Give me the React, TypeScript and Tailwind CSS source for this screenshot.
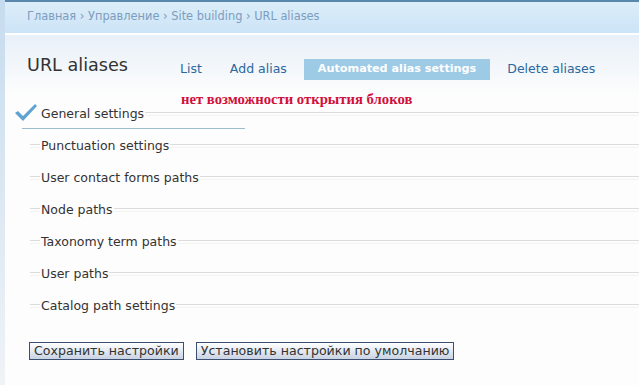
import { useState } from "react";

const sections = [
  "General settings",
  "Punctuation settings",
  "User contact forms paths",
  "Node paths",
  "Taxonomy term paths",
  "User paths",
  "Catalog path settings",
];

function CheckMark() {
  return (
    <svg width="24" height="20" viewBox="0 0 24 20" className="absolute left-[9px] top-[4px]">
      <path d="M1 11 L4 9 L9 14 L21 2 L23 4 L9 19 Z" fill="#5fa3d3" />
    </svg>
  );
}

function Line() {
  return (
    <>
      <div className="h-px bg-[#dcdcdc]" />
      <div className="h-[2px]" />
      <div className="h-px bg-[#f2f2f2]" />
    </>
  );
}

function Row({ label, active }: { label: string; active?: boolean }) {
  return (
    <div className="relative h-[32px] flex items-center">
      {active && <CheckMark />}
      <div className="w-[25px]" />
      <div className="w-[10px] flex flex-col">{!active && <Line />}</div>
      <span className="px-px text-[12.5px] text-[#333] whitespace-nowrap">{label}</span>
      <div className="flex-1 flex flex-col">
        <Line />
      </div>
      {active && (
        <div className="absolute left-[17px] top-[30px] w-[223px] h-px bg-[#9cbccf]" />
      )}
    </div>
  );
}

export default function App() {
  const [tab] = useState<string>("Automated alias settings");
  const tabs = ["List", "Add alias", "Automated alias settings", "Delete aliases"];

  return (
    <div
      className="w-[639px] h-[385px] overflow-hidden bg-[#fdfdfd] flex"
      style={{ fontFamily: '"DejaVu Sans", Verdana, sans-serif' }}
    >
      <div className="w-[5px] bg-gradient-to-b from-[#c6dcee] to-[#f0f3f6]" />
      <div className="flex-1 flex flex-col">
        {/* breadcrumb */}
        <div className="h-[33px] border-t-2 border-[#5a88ad] bg-gradient-to-b from-[#dcedf8] to-[#cce4f7] flex items-center pl-[22px] pb-[1px] text-[11.4px] text-[#7c9dc0]">
          Главная › Управление › Site building › URL aliases
        </div>
        <div className="h-[2px] bg-white" />

        <div className="bg-gradient-to-b from-[#e8f0f8] to-[#fdfdfd] h-[60px] flex items-start pt-[19px] pl-[22px]">
          <h1 className="text-[17.6px] text-[#333] w-[153px] leading-[22px]">URL aliases</h1>
          <div className="flex items-center pt-[5px]">
            {tabs.map((t, i) => (
              <span
                key={t}
                className={
                  t === tab
                    ? "h-[21px] px-[14px] flex items-center bg-[#9dcbe6] text-white font-bold text-[11.2px] mr-[17px]"
                    : i === 0
                    ? "text-[12.5px] text-[#2a68a0] mr-[28px]"
                    : "text-[12.5px] text-[#2a68a0] mr-[17px]"
                }
              >
                {t}
              </span>
            ))}
          </div>
        </div>

        <div className="relative">
          <div
            className="absolute left-[176px] top-[-7px] text-[14.7px] font-bold text-[#d0103a]"
            style={{ fontFamily: '"Liberation Serif", serif' }}
          >
            нет возможности открытия блоков
          </div>
        </div>

        <div className="mt-[3px]">
          {sections.map((s, i) => (
            <Row key={s} label={s} active={i === 0} />
          ))}
        </div>

        <div className="flex gap-[12px] pl-[24px] pt-[20px]">
          <button className="h-[18px] px-[4px] border border-[#3b4f73] bg-gradient-to-b from-white to-[#c9d3e3] text-[12.6px] text-[#333] leading-none">
            Сохранить настройки
          </button>
          <button className="h-[18px] px-[4px] border border-[#3b4f73] bg-gradient-to-b from-white to-[#c9d3e3] text-[12.6px] text-[#333] leading-none">
            Установить настройки по умолчанию
          </button>
        </div>
      </div>
    </div>
  );
}
